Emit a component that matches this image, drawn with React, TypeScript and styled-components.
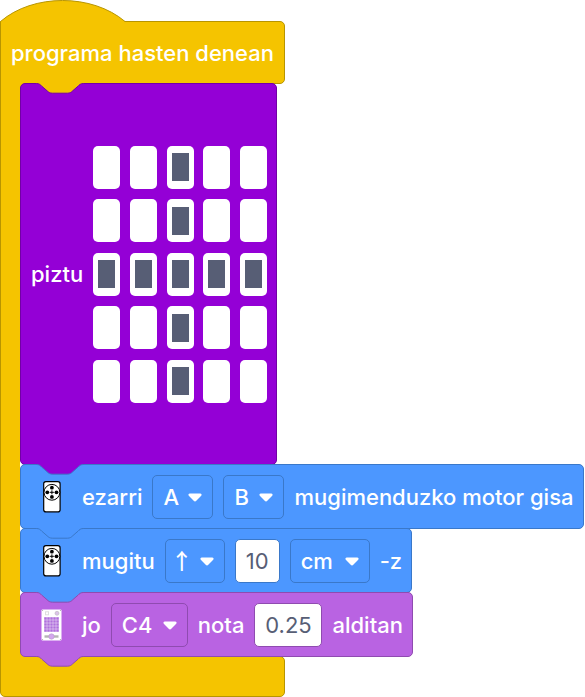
import React from "react";
import styled, { createGlobalStyle, css } from "styled-components";

type Tone = { fill: string; line: string };

const tones = {
  event: { fill: "#f5c400", line: "#b89500" },
  light: { fill: "#9400d6", line: "#7200a6" },
  motion: { fill: "#4c97ff", line: "#3a78c9" },
  sound: { fill: "#b963e2", line: "#8f4bb0" },
} satisfies Record<string, Tone>;

const GlobalStyle = createGlobalStyle`
  * { box-sizing: border-box; }
  body { margin: 0; background: #fff; }
`;

const Program = styled.main`
  display: flex;
  flex-direction: column;
  align-items: flex-start;
  padding-top: 21px;
  color: #fff;
  font: 500 22px/26px Inter, Roboto, sans-serif;
`;

const capBase = css`
  position: relative;
  width: 285px;
  border: 1px solid ${tones.event.line};
  background: ${tones.event.fill};
`;

const Header = styled.header`
  ${capBase}
  display: flex;
  align-items: center;
  height: 63px;
  padding: 0 10px;
  border-radius: 0 5px 5px 0;
  white-space: nowrap;
`;

const Dome = styled.svg`
  position: absolute;
  left: -1px;
  bottom: 60px;
  width: 126px;
  height: 23px;
`;

const Body = styled.div`
  position: relative;
  z-index: 1;
  display: flex;
  margin: -1px 0;
`;

const Rail = styled.div`
  width: 20px;
  flex: none;
  border-left: 1px solid ${tones.event.line};
  background: ${tones.event.fill};
`;

const Stack = styled.div`
  display: flex;
  flex-direction: column;
  align-items: flex-start;
  background:
    linear-gradient(${tones.event.fill}, ${tones.event.fill}) left top / 8px 8px no-repeat,
    linear-gradient(${tones.event.fill}, ${tones.event.fill}) left bottom / 8px 8px no-repeat;
`;

const Footer = styled.footer`
  ${capBase}
  height: 41px;
  border-radius: 0 5px 5px 5px;
`;

const Block = styled.section<{ $tone: Tone }>`
  position: relative;
  display: flex;
  align-items: center;
  gap: 10px;
  min-height: 65px;
  padding: 0 9px 0 10px;
  border: 1px solid ${(p) => p.$tone.line};
  border-radius: 5px;
  background: ${(p) => p.$tone.fill};
  white-space: nowrap;

  & + & {
    margin-top: -1px;
  }
`;

const MatrixBlock = styled(Block)`
  min-height: 382px;
`;

const NotchShape = styled.svg<{ $bottom?: boolean }>`
  position: absolute;
  left: 15px;
  top: ${(p) => (p.$bottom ? "auto" : "-1px")};
  bottom: ${(p) => (p.$bottom ? "-12px" : "auto")};
  width: 50px;
  height: 12px;
`;

function Notch({ fill, line, bottom }: { fill: string; line: string; bottom?: boolean }) {
  const edge =
    "M0.5 .5c2.7 0 4 1.3 5.3 2.7l5.3 4.6c1.3 1.3 2.7 2.4 5.3 2.4h15c2.7 0 4-1.1 5.3-2.4l5.3-4.6c1.3-1.4 2.7-2.7 5.3-2.7";
  return (
    <NotchShape $bottom={bottom} viewBox="0 0 50 12" aria-hidden="true">
      <path d={`${edge}V0H.5z`} fill={fill} />
      <path d={edge} fill="none" stroke={line} />
    </NotchShape>
  );
}

const IconSlot = styled.span`
  display: flex;
  justify-content: center;
  width: 41px;
`;

const Matrix = styled.fieldset`
  display: grid;
  grid-template: repeat(5, 43px) / repeat(5, 27px);
  justify-content: space-between;
  align-content: space-between;
  width: 174px;
  height: 257px;
  margin: 0;
  padding: 0;
  border: 0;
`;

const Led = styled.input`
  display: grid;
  place-content: center;
  width: 27px;
  height: 43px;
  margin: 0;
  appearance: none;
  border-radius: 5px;
  background: #fff;

  &:checked::before {
    content: "";
    width: 17px;
    height: 28px;
    background: #575e75;
  }
`;

const fieldBase = css`
  height: 44px;
  margin: 0;
  border-radius: 5px;
  font: inherit;
`;

const Picker = styled.span<{ $width: number }>`
  position: relative;
  display: flex;
  width: ${(p) => p.$width}px;
`;

const Select = styled.select<{ $tone: Tone; $symbol?: boolean }>`
  ${fieldBase}
  width: 100%;
  padding: ${(p) => (p.$symbol ? "0 5px 4px" : "0 10px")};
  appearance: none;
  border: 1px solid ${(p) => p.$tone.line};
  background: transparent;
  color: #fff;
  ${(p) => p.$symbol && css`font-family: "Noto Sans CJK JP", sans-serif;`}
`;

const Caret = styled.svg`
  position: absolute;
  right: 11px;
  top: 18px;
  width: 14px;
  height: 9px;
  pointer-events: none;
`;

const NumberBox = styled.input<{ $tone: Tone; $width: number }>`
  ${fieldBase}
  width: ${(p) => p.$width}px;
  padding: 0;
  border: 1px solid ${(p) => p.$tone.line};
  background: #fff;
  color: #575e75;
  font-weight: 400;
  text-align: center;
`;

type DropdownProps = { label: string; value: string; width: number; tone: Tone; symbol?: boolean };

function Dropdown({ label, value, width, tone, symbol }: DropdownProps) {
  return (
    <Picker $width={width}>
      <Select aria-label={label} $tone={tone} $symbol={symbol} defaultValue={value}>
        <option>{value}</option>
      </Select>
      <Caret viewBox="0 0 14 9" aria-hidden="true">
        <path d="M1.8.5h10.4c1.3 0 1.8 1.3 1 2.2L8.3 7.8c-.8.8-1.8.8-2.6 0L.8 2.7C0 1.8.5.5 1.8.5z" fill="#fff" />
      </Caret>
    </Picker>
  );
}

function MotorIcon() {
  return (
    <svg width="18" height="32" viewBox="0 0 18 32" aria-hidden="true">
      <rect x=".7" y=".7" width="16.4" height="30.2" rx="2.2" fill="#fff" stroke="#000" strokeWidth="1.2" />
      <circle cx="8.9" cy="11.3" r="7.9" fill="#fff" stroke="#000" />
      <circle cx="8.9" cy="6.7" r="1.9" />
      <circle cx="8.9" cy="15.9" r="1.9" />
      <circle cx="4.3" cy="11.3" r="1.9" />
      <circle cx="13.5" cy="11.3" r="1.9" />
      <path d="M8.9 9.3v4M6.9 11.3h4" stroke="#000" />
    </svg>
  );
}

function HubIcon() {
  const rows = [0, 1, 2, 3, 4];
  return (
    <svg width="21" height="32" viewBox="0 0 21 32" aria-hidden="true">
      <rect x=".5" y=".5" width="20" height="31" rx="1" fill="#fff" />
      <rect x="4.5" y="2.8" width="3" height="3" fill="#fff" stroke="#ddd" />
      <circle cx="16" cy="4.3" r="2" fill="#dcc2ea" stroke="#bbb" strokeWidth=".6" />
      {rows.map((r) =>
        rows.map((c) => (
          <rect key={`${r}${c}`} x={3.2 + c * 3} y={8.2 + r * 3} width="2.6" height="2.6" fill="#b070dc" />
        )),
      )}
      <path d="M3.5 27.5h14" stroke="#b5b5b5" strokeWidth="2.4" />
      <circle cx="10.5" cy="27.5" r="2.7" fill="#d3a6ee" stroke="#b99acb" strokeWidth=".6" />
      <g fill="#999">
        <circle cx="1.6" cy="1.6" r=".5" />
        <circle cx="19.4" cy="1.6" r=".5" />
        <circle cx="1.6" cy="30.4" r=".5" />
        <circle cx="19.4" cy="30.4" r=".5" />
      </g>
    </svg>
  );
}

const leds = ["00100", "00100", "11111", "00100", "00100"];

export default function App() {
  const { event, light, motion, sound } = tones;
  return (
    <>
      <GlobalStyle />
      <Program>
        <Header>
          <Dome viewBox="0 0 126 23" aria-hidden="true">
            <path d="M.5 21.5C33-6.5 92-6.5 125 21.5V23H.5z" fill={event.fill} />
            <path d="M.5 23V21.5C33-6.5 92-6.5 125 21.5" fill="none" stroke={event.line} />
          </Dome>
          <span>programa hasten denean</span>
        </Header>
        <Body>
          <Rail />
          <Stack>
            <MatrixBlock $tone={light}>
              <Notch fill={event.fill} line={light.line} />
              <span>piztu</span>
              <Matrix aria-label="piztu">
                {leds.map((row, r) =>
                  [...row].map((on, c) => (
                    <Led
                      key={`${r}-${c}`}
                      type="checkbox"
                      aria-label={`${r + 1}, ${c + 1}`}
                      defaultChecked={on === "1"}
                    />
                  )),
                )}
              </Matrix>
            </MatrixBlock>
            <Block $tone={motion}>
              <Notch fill={light.fill} line={motion.line} />
              <IconSlot><MotorIcon /></IconSlot>
              <span>ezarri</span>
              <Dropdown label="Motor 1" value="A" width={61} tone={motion} />
              <Dropdown label="Motor 2" value="B" width={61} tone={motion} />
              <span>mugimenduzko motor gisa</span>
            </Block>
            <Block $tone={motion}>
              <Notch fill={motion.fill} line={motion.line} />
              <IconSlot><MotorIcon /></IconSlot>
              <span>mugitu</span>
              <Dropdown label="Norabidea" value="↑" width={60} tone={motion} symbol />
              <NumberBox aria-label="Distantzia" defaultValue="10" $width={45} $tone={motion} />
              <Dropdown label="Unitatea" value="cm" width={80} tone={motion} />
              <span>-z</span>
            </Block>
            <Block $tone={sound}>
              <Notch fill={motion.fill} line={sound.line} />
              <IconSlot><HubIcon /></IconSlot>
              <span>jo</span>
              <Dropdown label="Nota" value="C4" width={77} tone={sound} />
              <span>nota</span>
              <NumberBox aria-label="Iraupena" defaultValue="0.25" $width={68} $tone={sound} />
              <span>alditan</span>
              <Notch fill={sound.fill} line={sound.line} bottom />
            </Block>
          </Stack>
        </Body>
        <Footer />
      </Program>
    </>
  );
}
